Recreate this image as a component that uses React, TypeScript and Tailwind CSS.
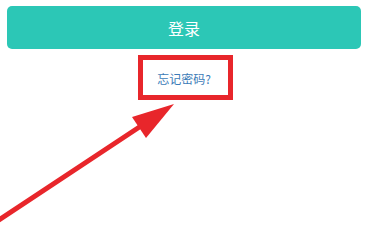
import React from "react";

export default function App() {
  return (
    <div
      className="relative w-[368px] h-[236px] bg-white overflow-hidden"
      style={{ fontFamily: '"Noto Sans CJK SC", "Noto Sans", sans-serif' }}
    >
      <div className="flex flex-col items-center pt-[6px] px-[7px]">
        <div className="w-full h-[43px] rounded-[5px] bg-[#2cc7b6] flex items-center justify-center text-white text-[16px]">
          登录
        </div>
        <div className="mt-[24px] text-[12px] text-[#3b7bb7] leading-none">忘记密码?</div>
      </div>
      <div className="absolute left-[138px] top-[55px] w-[95px] h-[45px] border-[5px] border-[#e8262b]" />
      <svg className="absolute left-0 top-0" width="368" height="236" viewBox="0 0 368 236">
        <line x1="-4" y1="222" x2="150" y2="120" stroke="#e8262b" strokeWidth="5" strokeLinecap="round" />
        <polygon points="174,104 132,117 146,138" fill="#e8262b" />
      </svg>
    </div>
  );
}
